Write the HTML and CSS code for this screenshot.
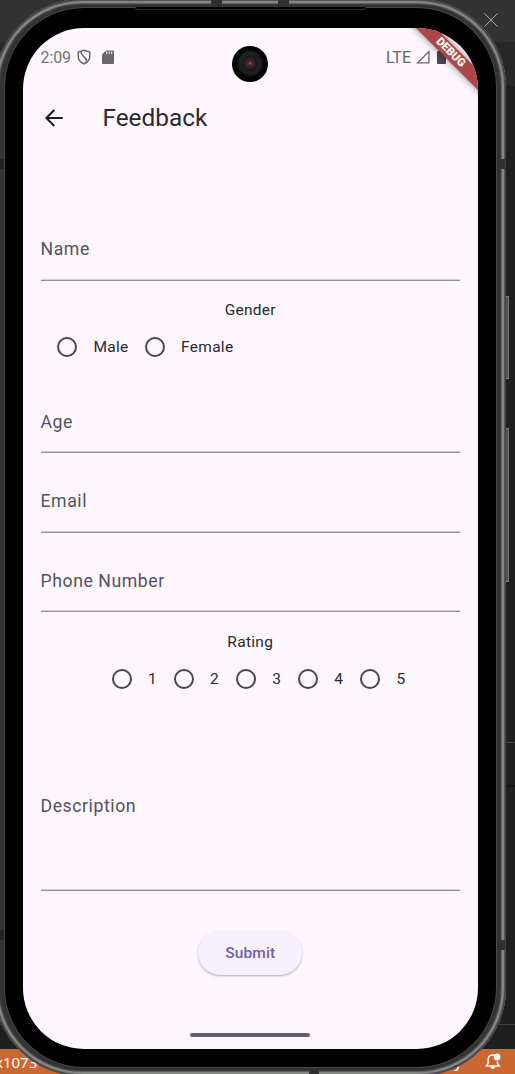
FILE: index.html
```html
<!DOCTYPE html>
<html lang="en">
<head>
<meta charset="utf-8">
<title>Feedback</title>
<link rel="stylesheet" href="styles.css">
</head>
<body>
<div class="desktop">
  <div class="ide">
    <div class="ide-title">
      <svg class="close" viewBox="0 0 14 14"><path d="M.5.5l13 13M13.5.5l-13 13"/></svg>
    </div>
    <div class="ide-tabs"></div>
    <div class="ide-panel"></div>
    <div class="ide-panel ide-panel-small"></div>
    <div class="ide-panel ide-panel-tall"></div>
    <div class="ide-panel ide-panel-small"></div>
    <div class="ide-status">
      <span>x1073</span>
      <span class="status-right">y
        <svg class="bell" viewBox="0 0 16 17"><path d="M9 2.2C5.4 1 3.2 3.5 3.2 6.5V10L1.5 13h12.6L12.5 10V8.5"/><path class="clapper" d="M5.5 14h4.6c-.3 2.4-4.3 2.4-4.6 0z"/><circle cx="12" cy="4" r="3.4"/></svg>
      </span>
    </div>
  </div>

  <i class="side-key power"></i>
  <i class="side-key volume"></i>
  <div class="phone">
    <i class="band top-a"></i><i class="band top-b"></i>
    <i class="band left-a"></i><i class="band left-b"></i>
    <i class="band right-a"></i><i class="band right-b"></i>
    <i class="band bottom-a"></i>
    <div class="bezel">
      <i class="speaker"></i>
      <div class="screen">
        <div class="statusbar">
          <div class="status-group">
            <span class="clock">2:09</span>
            <svg class="shield" viewBox="0 0 14 16"><path d="M7 1.2L12.7 3v4.4c0 3.500-2.200 6-5.700 7.400C3.500 13.400 1.300 10.900 1.300 7.400V3z"/><path d="M4 2.700C3.800 7.500 10 7.500 9.500 12.700"/></svg>
            <svg class="sd" viewBox="0 0 12 14"><path d="M4 .5h7a1 1 0 0 1 1 1V13a1 1 0 0 1-1 1H1a1 1 0 0 1-1-1V4.500z"/><path class="pins" d="M4.700 1.500v2.600M7.200 1.500v2.600M9.700 1.500v2.600"/></svg>
          </div>
          <div class="status-group">
            <span class="lte">LTE</span>
            <svg class="signal" viewBox="0 0 14 14"><path d="M1.600 12.900H12.900V1.600z"/></svg>
            <svg class="battery" viewBox="0 0 9 14"><path d="M2.500 1V0h4v1H8a1 1 0 0 1 1 1v11a1 1 0 0 1-1 1H1a1 1 0 0 1-1-1V2a1 1 0 0 1 1-1z"/></svg>
          </div>
        </div>
        <header class="appbar">
          <svg class="back" viewBox="0 0 18 18"><path d="M17.700 9H1.700M9.300 1L1.300 9l8 8"/></svg>
          <h1>Feedback</h1>
        </header>
        <main class="form">
          <div class="field name">Name</div>
          <div class="group-title">Gender</div>
          <div class="radios gender">
            <label><i class="radio"></i>Male</label>
            <label><i class="radio"></i>Female</label>
          </div>
          <div class="field age">Age</div>
          <div class="field email">Email</div>
          <div class="field tel">Phone Number</div>
          <div class="group-title rating-title">Rating</div>
          <div class="radios rating">
            <label><i class="radio"></i>1</label>
            <label><i class="radio"></i>2</label>
            <label><i class="radio"></i>3</label>
            <label><i class="radio"></i>4</label>
            <label><i class="radio"></i>5</label>
          </div>
          <div class="field description">Description</div>
          <button class="submit">Submit</button>
        </main>
        <div class="homebar"></div>
        <div class="debug">DEBUG</div>
        <div class="camera"></div>
      </div>
    </div>
  </div>
</div>
</body>
</html>
```
FILE: styles.css
```css
* { box-sizing: border-box; }
body { margin: 0; font-family: Roboto, sans-serif; }
.desktop { position: relative; width: 515px; height: 1074px; overflow: hidden; background: #1f1f1f; }

.ide { display: flex; flex-direction: column; height: 100%; }
.ide-title { height: 42px; background: #323232; display: flex; justify-content: flex-end; padding: 13px 17px 0 0; }
.close { width: 14px; height: 14px; fill: none; stroke: #aaa; stroke-width: 1; }
.ide-tabs { height: 44px; background: #272727; }
.ide-panel { height: 657px; border-bottom: 1px solid #444; }
.ide-panel-small { height: 44px; border-bottom: 2px solid #151515; }
.ide-panel-tall { height: 238px; }
.ide-panel-tall + .ide-panel-small { flex: 1; border: 0; }
.ide-status { height: 25px; background: #cc6633; color: #fff; font: 15px/25px "Noto Sans", sans-serif; display: flex; justify-content: space-between; padding: 0 14px 0 0; }
.ide-status > span:first-child { margin: 1px 0 0 -5px; }
.status-right { display: flex; gap: 23px; align-items: center; }
.bell { width: 16px; height: 17px; fill: none; stroke: #fff; stroke-width: 1.5; }
.bell circle, .bell .clapper { fill: #fff; stroke: none; }

.side-key { position: absolute; left: 505px; width: 4px; background: linear-gradient(90deg, #222 0 1px, #555 1px 3px, #777 3px); border-top: 1px solid #777; border-bottom: 1px solid #888; }
.power { top: 296px; height: 83px; }
.volume { top: 428px; height: 154px; }

.phone {
  position: absolute; left: -6px; top: -1px; width: 512px; height: 1077px;
  padding: 9px 10px 9px 11px; border-radius: 88px;
  background: #333;
  box-shadow: inset 0 0 0 1px #444, inset 0 0 0 2px #555, inset 0 0 0 4px #858785, inset 0 0 0 5px #606060, inset 0 0 0 6px #3a3a3a;
}
.band { position: absolute; background: #303030; }
.top-a, .top-b { top: 1px; width: 11px; height: 6px; }
.top-a { left: 217px; }
.top-b { left: 284px; }
.left-a, .left-b { left: 2px; width: 8px; height: 10px; background: #222; }
.right-a, .right-b { right: 1px; width: 8px; height: 10px; }
.left-a { top: 160px; }
.left-b { top: 931px; }
.right-a { top: 160px; }
.right-b { top: 941px; }
.bottom-a { left: 315px; bottom: 2px; width: 10px; height: 6px; }

.bezel {
  height: 100%; padding: 20px 18px 18px; border-radius: 79px; background: #000;
  box-shadow: 0 0 0 1px #484848, 0 0 0 2px #303030;
}
.speaker { position: absolute; left: 141px; top: 8px; width: 231px; height: 3px; border: 1px solid #303030; border-top: 0; border-radius: 0 0 3px 3px; background: #000; }
.screen {
  position: relative; height: 1021px; overflow: hidden; border-radius: 61px;
  background: #fef7ff; color: #2b292f; display: flex; flex-direction: column;
}

.statusbar { height: 60px; display: flex; justify-content: space-between; padding: 0 32px 2px 17.500px; color: #68656b; font-size: 16px; }
.status-group { display: flex; align-items: center; }
.clock { letter-spacing: -.1px; color: #77747a; }
.shield { width: 14px; height: 16px; margin-left: 6px; fill: none; stroke: #68656b; stroke-width: 1.500; }
.sd { width: 12px; height: 14px; margin-left: 11px; fill: #68656b; }
.sd .pins { stroke: #fef7ff; stroke-width: 1; }
.signal { width: 14px; height: 14px; margin: 0 7px 0 5px; fill: none; stroke: #68656b; stroke-width: 1.300; }
.battery { width: 9px; height: 14px; fill: #4a484d; }

.appbar { height: 60px; display: flex; align-items: center; padding-left: 21.500px; }
.back { width: 18px; height: 18px; fill: none; stroke: #1d1b20; stroke-width: 2; }
h1 { margin: 0 0 0 40px; font-size: 24.350px; font-weight: 400; line-height: 30px; }

.form { display: flex; flex-direction: column; padding: 70px 18px 0 17.500px; }
.field { height: 63px; line-height: 62px; border-bottom: 1px solid #938f96; color: #56525b; font-size: 17.700px; letter-spacing: .55px; box-shadow: 0 -1px 0 #d5cfd6 inset; }
.name { height: 63px; }
.age { margin-top: 24px; line-height: 64px; }
.email { margin-top: 17px; }
.tel { margin-top: 16px; line-height: 64px; }
.description { height: 116px; margin-top: 78px; }
.group-title { height: 40px; line-height: 40px; margin-top: 9px; text-align: center; font-size: 15.500px; letter-spacing: .28px; }
.rating-title { margin-top: 10px; }
.radios { height: 36px; display: flex; align-items: center; font-size: 15.500px; letter-spacing: .28px; }
.gender { margin-top: -1px; margin-bottom: 1px; }
.radios label { display: flex; align-items: center; gap: 16.500px; }
.radio { width: 20px; height: 20px; border: 2px solid #49454f; border-radius: 50%; }
.gender { padding-left: 16.500px; gap: 16px; }
.rating { padding-left: 71px; margin-top: -1px; }
.rating label { width: 62.100px; }
.submit { align-self: center; width: 104px; height: 44px; margin-top: 40px; border: 0; border-radius: 22px; background: #f7f2fa; color: #735dab; font: 500 15.500px Roboto, sans-serif; letter-spacing: .11px; box-shadow: 0 1px 2px rgba(0,0,0,.25), 0 1px 3px rgba(0,0,0,.08); }
.homebar { align-self: center; width: 120px; height: 4px; margin: 58px 2px 0 0; border-radius: 2px; background: #656267; }

.debug {
  position: absolute; right: -33px; top: 18px; width: 120px; height: 13.500px; transform: rotate(45deg);
  background: #ae4648; color: #fff; font-size: 11.300px; font-weight: 900; line-height: 13.500px; text-align: center;
  padding-right: 1px;
  box-shadow: 0 0 7px rgba(0,0,0,.5);
}
.camera {
  position: absolute; left: 209px; top: 18px; width: 36px; height: 36px; border-radius: 50%;
  background: radial-gradient(circle at 50% 48%, #a03c50 0 1px, #3f262c 2px 3px, #2b2022 5px, #171719 7px, #1f1f21 8px 11px, #0a0a0a 13px, #000 15px);
}
```
